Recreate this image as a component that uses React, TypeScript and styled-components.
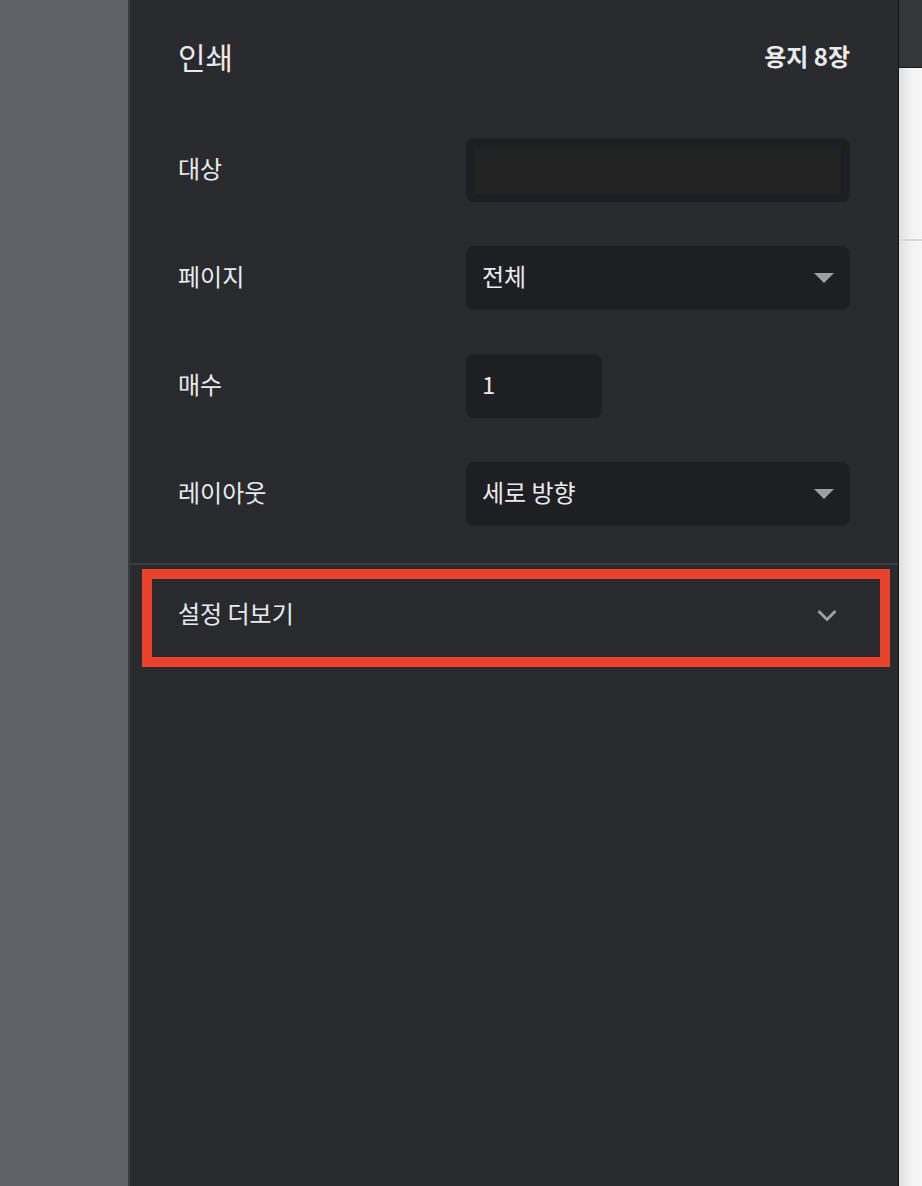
import React from 'react'
import styled, { createGlobalStyle } from 'styled-components'

const GlobalStyle = createGlobalStyle`
  html, body {
    margin: 0;
    padding: 0;
    height: 100%;
    background: #5f6368;
  }
  #root {
    height: 100%;
  }
  * {
    box-sizing: border-box;
  }
`

const PAGE = styled.div`
  display: flex;
  height: 1186px;
  font-family: "Noto Sans CJK KR", "Noto Sans", sans-serif;
  color: #e8eaed;
`

const PREVIEW_STRIP = styled.div`
  width: 128px;
  flex-shrink: 0;
  background: #5f6368;
`

const PANEL = styled.div`
  width: 771px;
  flex-shrink: 0;
  background: #292a2e;
  border-left: 2px solid #3a3b3f;
  border-right: 1px solid #151618;
  display: flex;
  flex-direction: column;
`

const HEADER = styled.div`
  height: 116px;
  padding: 0 48px 4px;
  display: flex;
  align-items: center;
  justify-content: space-between;
`

const TITLE = styled.div`
  font-size: 30px;
  font-weight: 400;
  line-height: 1;
`

const SHEET_COUNT = styled.div`
  font-size: 24px;
  font-weight: 700;
  line-height: 1;
`

const FORM = styled.div`
  padding: 22px 48px 37px;
  display: flex;
  flex-direction: column;
  gap: 44px;
  border-bottom: 2px solid #3c3d41;
`

const ROW = styled.div`
  display: grid;
  grid-template-columns: 288px 1fr;
  align-items: center;
  height: 64px;
`

const LABEL = styled.div`
  font-size: 24px;
  line-height: 1;
  padding-bottom: 4px;
`

const FIELD = styled.div<{ $width?: number }>`
  height: 64px;
  width: ${p => (p.$width ? `${p.$width}px` : '100%')};
  background: #1e1f22;
  border-radius: 8px;
  display: flex;
  align-items: center;
  justify-content: space-between;
  padding: 0 16px 4px;
  font-size: 24px;
  line-height: 1;
`

const EMPTY_FIELD = styled.div`
  height: 64px;
  background: #1e1f22;
  border-radius: 8px;
  padding: 10px 9px 8px;
`

const EMPTY_INNER = styled.div`
  height: 100%;
  background: #232323;
`

const TRIANGLE = styled.div`
  width: 0;
  height: 0;
  margin-top: 4px;
  border-left: 10px solid transparent;
  border-right: 10px solid transparent;
  border-top: 10px solid #9aa0a6;
`

const MORE_WRAP = styled.div`
  padding: 4px 8px 0 12px;
`

const HIGHLIGHT = styled.div`
  border: 10px solid #e9412b;
  height: 98px;
  display: flex;
  align-items: center;
  justify-content: space-between;
  padding: 0 42px 10px 26px;
`

const MORE_TEXT = styled.div`
  font-size: 24px;
  line-height: 1;
`

const RIGHT_EDGE = styled.div`
  flex: 1;
  display: flex;
  flex-direction: column;
  background: linear-gradient(to right, #dedede, #f3f3f3 12px, #f6f6f6);
`

const TOP_BAR = styled.div`
  height: 68px;
  background: #35363a;
  border-bottom: 1px solid #1a1a1c;
`

const SHEET_LINE = styled.div`
  margin-top: 171px;
  height: 2px;
  background: #d6d6d6;
`

const Chevron = () => (
  <svg width="22" height="15" viewBox="0 0 22 15" style={{ marginTop: 4 }}>
    <path d="M2.5 3 L11 11.5 L19.5 3" fill="none" stroke="#9aa0a6" strokeWidth="3" />
  </svg>
)

const App = () => {
  return (
    <PAGE>
      <GlobalStyle />
      <PREVIEW_STRIP />
      <PANEL>
        <HEADER>
          <TITLE>인쇄</TITLE>
          <SHEET_COUNT>용지 8장</SHEET_COUNT>
        </HEADER>
        <FORM>
          <ROW>
            <LABEL>대상</LABEL>
            <EMPTY_FIELD>
              <EMPTY_INNER />
            </EMPTY_FIELD>
          </ROW>
          <ROW>
            <LABEL>페이지</LABEL>
            <FIELD>
              <span>전체</span>
              <TRIANGLE />
            </FIELD>
          </ROW>
          <ROW>
            <LABEL>매수</LABEL>
            <FIELD $width={136}>
              <span>1</span>
            </FIELD>
          </ROW>
          <ROW>
            <LABEL>레이아웃</LABEL>
            <FIELD>
              <span>세로 방향</span>
              <TRIANGLE />
            </FIELD>
          </ROW>
        </FORM>
        <MORE_WRAP>
          <HIGHLIGHT>
            <MORE_TEXT>설정 더보기</MORE_TEXT>
            <Chevron />
          </HIGHLIGHT>
        </MORE_WRAP>
      </PANEL>
      <RIGHT_EDGE>
        <TOP_BAR />
        <SHEET_LINE />
      </RIGHT_EDGE>
    </PAGE>
  )
}

export default App
